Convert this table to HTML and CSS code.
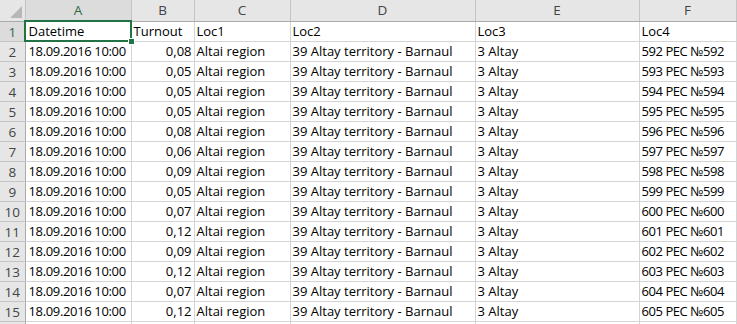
FILE: index.html
```html
<!DOCTYPE html>
<html>
<head>
<meta charset="utf-8">
<link rel="stylesheet" href="styles.css">
</head>
<body>
<table class="sheet">
<colgroup>
<col class="c-rh"><col class="c-a"><col class="c-b"><col class="c-c"><col class="c-d"><col class="c-e"><col class="c-f"><col class="c-g">
</colgroup>
<thead>
<tr class="hdr">
<th class="corner"><span class="tri"></span></th>
<th class="sel">A</th><th>B</th><th>C</th><th>D</th><th>E</th><th>F</th><th class="g"></th>
</tr>
</thead>
<tbody>
<tr><th class="rh selr">1</th><td class="active">Datetime<span class="handle"></span></td><td>Turnout</td><td>Loc1</td><td>Loc2</td><td>Loc3</td><td>Loc4</td><td class="g"></td></tr>
<tr><th class="rh">2</th><td class="dt">18.09.2016 10:00</td><td class="num">0,08</td><td>Altai region</td><td>39 Altay territory - Barnaul</td><td>3 Altay</td><td class="pec">592 PEC №592</td><td class="g"></td></tr>
<tr><th class="rh">3</th><td class="dt">18.09.2016 10:00</td><td class="num">0,05</td><td>Altai region</td><td>39 Altay territory - Barnaul</td><td>3 Altay</td><td class="pec">593 PEC №593</td><td class="g"></td></tr>
<tr><th class="rh">4</th><td class="dt">18.09.2016 10:00</td><td class="num">0,05</td><td>Altai region</td><td>39 Altay territory - Barnaul</td><td>3 Altay</td><td class="pec">594 PEC №594</td><td class="g"></td></tr>
<tr><th class="rh">5</th><td class="dt">18.09.2016 10:00</td><td class="num">0,05</td><td>Altai region</td><td>39 Altay territory - Barnaul</td><td>3 Altay</td><td class="pec">595 PEC №595</td><td class="g"></td></tr>
<tr><th class="rh">6</th><td class="dt">18.09.2016 10:00</td><td class="num">0,08</td><td>Altai region</td><td>39 Altay territory - Barnaul</td><td>3 Altay</td><td class="pec">596 PEC №596</td><td class="g"></td></tr>
<tr><th class="rh">7</th><td class="dt">18.09.2016 10:00</td><td class="num">0,06</td><td>Altai region</td><td>39 Altay territory - Barnaul</td><td>3 Altay</td><td class="pec">597 PEC №597</td><td class="g"></td></tr>
<tr><th class="rh">8</th><td class="dt">18.09.2016 10:00</td><td class="num">0,09</td><td>Altai region</td><td>39 Altay territory - Barnaul</td><td>3 Altay</td><td class="pec">598 PEC №598</td><td class="g"></td></tr>
<tr><th class="rh">9</th><td class="dt">18.09.2016 10:00</td><td class="num">0,05</td><td>Altai region</td><td>39 Altay territory - Barnaul</td><td>3 Altay</td><td class="pec">599 PEC №599</td><td class="g"></td></tr>
<tr><th class="rh">10</th><td class="dt">18.09.2016 10:00</td><td class="num">0,07</td><td>Altai region</td><td>39 Altay territory - Barnaul</td><td>3 Altay</td><td class="pec">600 PEC №600</td><td class="g"></td></tr>
<tr><th class="rh">11</th><td class="dt">18.09.2016 10:00</td><td class="num">0,12</td><td>Altai region</td><td>39 Altay territory - Barnaul</td><td>3 Altay</td><td class="pec">601 PEC №601</td><td class="g"></td></tr>
<tr><th class="rh">12</th><td class="dt">18.09.2016 10:00</td><td class="num">0,09</td><td>Altai region</td><td>39 Altay territory - Barnaul</td><td>3 Altay</td><td class="pec">602 PEC №602</td><td class="g"></td></tr>
<tr><th class="rh">13</th><td class="dt">18.09.2016 10:00</td><td class="num">0,12</td><td>Altai region</td><td>39 Altay territory - Barnaul</td><td>3 Altay</td><td class="pec">603 PEC №603</td><td class="g"></td></tr>
<tr><th class="rh">14</th><td class="dt">18.09.2016 10:00</td><td class="num">0,07</td><td>Altai region</td><td>39 Altay territory - Barnaul</td><td>3 Altay</td><td class="pec">604 PEC №604</td><td class="g"></td></tr>
<tr><th class="rh">15</th><td class="dt">18.09.2016 10:00</td><td class="num">0,12</td><td>Altai region</td><td>39 Altay territory - Barnaul</td><td>3 Altay</td><td class="pec">605 PEC №605</td><td class="g"></td></tr>
<tr class="partial"><th class="rh"></th><td></td><td></td><td></td><td></td><td></td><td></td><td class="g"></td></tr>
</tbody>
</table>
</body>
</html>
```

FILE: styles.css
```css
html, body {
  margin: 0;
  padding: 0;
  background: #ffffff;
  overflow: hidden;
}

.sheet {
  border-collapse: collapse;
  table-layout: fixed;
  width: 746px;
  font-family: "Open Sans", "Noto Sans", sans-serif;
  font-size: 13px;
  color: #000000;
}

.c-rh { width: 25px; }
.c-a { width: 106px; }
.c-b { width: 63px; }
.c-c { width: 96px; }
.c-d { width: 185px; }
.c-e { width: 164px; }
.c-f { width: 97px; }
.c-g { width: 10px; }

.sheet td,
.sheet th {
  box-sizing: border-box;
  height: 20px;
  padding: 0 2px 1px 2px;
  border-right: 1px solid #d4d4d4;
  border-bottom: 1px solid #d4d4d4;
  white-space: nowrap;
  overflow: hidden;
  vertical-align: bottom;
  line-height: 17px;
  text-align: left;
  font-weight: normal;
}

.sheet td:first-of-type {
  padding-left: 3px;
}

.sheet td.dt {
  letter-spacing: -0.35px;
}

.sheet td.pec {
  letter-spacing: -0.45px;
}

.hdr th {
  height: 21px;
  background: #e6e6e6;
  color: #444444;
  font-size: 13.5px;
  text-align: center;
  vertical-align: middle;
  border-right: 1px solid #c4c4c4;
  border-bottom: 1px solid #ababab;
  padding: 0;
  line-height: 20px;
}

.hdr th.sel {
  background: #dcdcdc;
  color: #2e6b45;
}

.hdr th.g,
.rh {
  border-right: 1px solid #c4c4c4;
}

.corner {
  position: relative;
}

.tri {
  position: absolute;
  right: 3px;
  bottom: 3px;
  width: 0;
  height: 0;
  border-left: 12px solid transparent;
  border-bottom: 12px solid #b7b7b7;
}

.sheet th.rh {
  background: #e6e6e6;
  color: #444444;
  font-size: 13.5px;
  text-align: center;
  padding: 0;
  border-right: 1px solid #ababab;
  border-bottom: 1px solid #c4c4c4;
}

.sheet th.selr {
  background: #dcdcdc;
  color: #2e6b45;
}

.num {
  text-align: right !important;
}

.sheet td.active {
  position: relative;
  overflow: visible;
  outline: 2px solid #217346;
  outline-offset: -1px;
}

.handle {
  position: absolute;
  right: -4px;
  bottom: -4px;
  width: 5px;
  height: 5px;
  background: #217346;
  border: 1px solid #ffffff;
}

.partial td, .partial th {
  height: 10px;
}
```
